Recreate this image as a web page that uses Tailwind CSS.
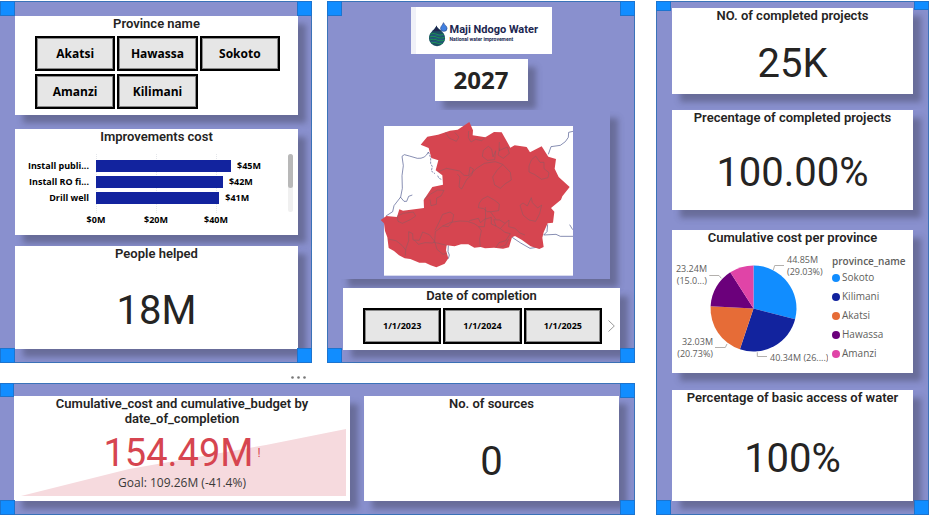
<!DOCTYPE html>
<html lang="en">
<head>
<meta charset="utf-8">
<meta name="viewport" content="width=device-width, initial-scale=1">
<title>Maji Ndogo Water dashboard</title>
<script src="https://cdn.jsdelivr.net/npm/@tailwindcss/browser@4"></script>
</head>
<body class="bg-white font-['Roboto',sans-serif] text-[#252423]">
<main class="grid grid-cols-[635fr_273fr] gap-[21px] pt-px pr-[3px]">
  <div class="flex flex-col">
    <div class="grid grid-cols-[312fr_308fr] gap-[15px]">

      <!-- Provinces, improvements, people -->
      <section class="relative flex flex-col border border-l-0 border-[#3b73b9] bg-[#8990ce] pt-[14px] pr-[13px] pb-[13px] pl-[15px]">
        <article class="min-h-[99px] bg-white shadow-[8px_8px_6px_0_rgba(60,60,80,0.42)]">
          <h2 class="text-center text-[13px] leading-4 font-semibold">Province name</h2>
          <div class="mt-1 grid grid-cols-3 gap-x-[2px] gap-y-[3px] pr-[18px] pl-5 pb-[6px] font-['Open_Sans',sans-serif] text-[12px] font-bold text-black">
            <button class="h-[35px] border-2 border-black bg-[#e6e6e6] shadow-[inset_0_0_0_1px_#8a8a8a]">Akatsi</button>
            <button class="h-[35px] border-2 border-black bg-[#e6e6e6] shadow-[inset_0_0_0_1px_#8a8a8a]">Hawassa</button>
            <button class="h-[35px] border-2 border-black bg-[#e6e6e6] shadow-[inset_0_0_0_1px_#8a8a8a]">Sokoto</button>
            <button class="h-[35px] border-2 border-black bg-[#e6e6e6] shadow-[inset_0_0_0_1px_#8a8a8a]">Amanzi</button>
            <button class="h-[35px] border-2 border-black bg-[#e6e6e6] shadow-[inset_0_0_0_1px_#8a8a8a]">Kilimani</button>
          </div>
        </article>

        <article class="mt-[14px] min-h-[106px] bg-white shadow-[8px_8px_6px_0_rgba(60,60,80,0.42)]">
          <h2 class="text-center text-[13px] leading-4 font-semibold">Improvements cost</h2>
          <div class="mt-[9px] flex pr-[5px] font-['Open_Sans',sans-serif] text-[9px] leading-3 font-bold text-black">
            <div class="flex w-[81px] flex-col gap-1 pt-[6px] pr-[7px] text-right whitespace-nowrap">
              <span>Install publi...</span>
              <span>Install RO fi...</span>
              <span>Drill well</span>
            </div>
            <div class="mr-3 flex-1">
              <div class="relative flex flex-col gap-1 pt-[6px] pb-[9px]">
                <div class="absolute inset-0 grid grid-cols-3">
                  <i class="border-l border-dotted border-gray-200"></i>
                  <i class="border-l border-dotted border-gray-200"></i>
                  <i class="border-l border-dotted border-gray-200"></i>
                </div>
                <div class="relative flex gap-[6px]"><b class="h-3 shrink-0 bg-[#12239e]" style="width:75%"></b>$45M</div>
                <div class="relative flex gap-[6px]"><b class="h-3 shrink-0 bg-[#12239e]" style="width:70.5%"></b>$42M</div>
                <div class="relative flex gap-[6px]"><b class="h-3 shrink-0 bg-[#12239e]" style="width:68.5%"></b>$41M</div>
              </div>
              <div class="grid grid-cols-3 pt-px">
                <span class="w-fit -translate-x-1/2">$0M</span>
                <span class="w-fit -translate-x-1/2">$20M</span>
                <span class="w-fit -translate-x-1/2">$40M</span>
              </div>
            </div>
            <div class="mb-[14px] w-[5px] rounded-full bg-[#f0f0f0]"><div class="h-[34px] rounded-full bg-[#b8b8b8]"></div></div>
          </div>
        </article>

        <article class="mt-[11px] flex min-h-[103px] flex-1 flex-col bg-white shadow-[8px_8px_6px_0_rgba(60,60,80,0.42)]">
          <h2 class="text-center text-[13px] leading-4 font-semibold">People helped</h2>
          <p class="flex flex-1 items-center justify-center pt-[10px] text-[40px] leading-10">18M</p>
        </article>
        <span class="absolute -top-px left-0 size-[15px] border border-[#1c74cf] bg-[#118dff]"></span>
        <span class="absolute -top-px -right-px size-[15px] border border-[#1c74cf] bg-[#118dff]"></span>
        <span class="absolute -bottom-px left-0 size-[15px] border border-[#1c74cf] bg-[#118dff]"></span>
        <span class="absolute -right-px -bottom-px size-[15px] border border-[#1c74cf] bg-[#118dff]"></span>
      </section>

      <!-- Logo, year, map, dates -->
      <section class="relative flex flex-col border border-[#3b73b9] bg-[#8990ce] px-3 pt-[5px] pb-3">
        <div class="flex h-[47px] w-[141px] items-center gap-[2px] self-center border-l-[5px] border-[#f0f1f8] bg-white pt-2 pl-3 text-[#20264f]">
          <svg class="w-5 shrink-0" viewBox="322 64 62 76" aria-hidden="true">
            <path d="M348 75 C352 88 375 93 375 114 A25 25 0 0 1 325 114 C325 95 345 88 348 75Z" fill="#1c4d62"/>
            <path d="M348 75 C350 84 358 88 364 93 H334 C341 88 346 84 348 75Z" fill="#20264f"/>
            <path d="M329 102 q10 -5 20 0 t21 0 M326 111 q12 -5 24 0 t24 0 M327 120 q12 -5 23 0 t23 0 M332 129 q9 -4 18 0 t17 0" fill="none" stroke="#1d8b5b" stroke-width="3.5"/>
            <path d="M330 106 q10 -4 20 0 t21 0 M327 116 q12 -5 24 0 t22 0 M330 125 q9 -4 20 0 t19 0" fill="none" stroke="#2a5b99" stroke-width="2"/>
            <path d="M370 66 C373 74 381 76 381 84 A10 9 0 0 1 361 84 C361 77 368 73 370 66Z" fill="#3f7fe0" stroke="#254282" stroke-width="2"/>
          </svg>
          <div class="pb-1 whitespace-nowrap">
            <p class="text-[11px] leading-3 font-bold">Maji Ndogo Water</p>
            <p class="text-[5px] leading-[6px] font-bold">National water improvement</p>
          </div>
        </div>
        <p class="mt-[5px] w-[93px] self-center bg-white text-center font-['Open_Sans',sans-serif] text-[24px] leading-[42px] font-bold shadow-[8px_8px_6px_0_rgba(60,60,80,0.42)]">2027</p>

        <div class="mt-[9px] mr-3 bg-[#8990ce] shadow-[8px_8px_6px_0_rgba(60,60,80,0.42)]">
          <svg class="block w-full" viewBox="30 15 810 507" role="img" aria-label="Map of provinces">
            <rect x="162" y="63" width="567" height="449" fill="#fff"/>
            <g fill="none" stroke="#4c568c" stroke-width="2">
              <path d="M295 141 Q286 162 262 160 L238 153 L223 149 L216 154 L220 182 L216 212 L217 250 L212 276 L192 302 L188 320 L168 333"/>
              <path d="M211 276 L222 289 L230 289 L236 274 L247 270"/>
              <path d="M295 141 L302 158 L302 176 L307 185 L304 198 L315 206 M323 212 l4 8 l7 3" stroke-dasharray="7 3"/>
              <path d="M655 148 L663 125 L691 121 L706 110 L715 97 L716 82 L729 79"/>
              <path d="M653 358 L651 380 L641 390 L678 388 L691 394 L729 394 M719 359 L728 374"/>
              <path d="M545 396 L572 414 L600 430 L620 427"/>
              <path d="M355 421 L354 440 L358 450 L355 461"/>
            </g>
            <path fill="#d64550" d="M152 345 L169 333 L201 336 L208 313 L219 317 L282 309 L281 285 L307 246 L339 239 L337 211 L317 196 L325 166 L304 159 L296 129 L272 119 L292 95 L324 89 L360 77 L383 74 L418 51 L429 76 L428 91 L466 97 L492 81 L515 82 L541 128 L554 121 L590 126 L600 142 L635 124 L655 155 L678 162 L674 191 L686 216 L719 246 L697 274 L693 284 L663 309 L673 320 L669 353 L653 355 L641 382 L637 398 L641 426 L628 432 L602 424 L576 405 L555 393 L546 397 L537 427 L519 431 L492 428 L465 430 L452 426 L433 428 L415 418 L393 418 L374 424 L350 421 L348 436 L355 460 L344 476 L319 487 L302 481 L286 473 L268 473 L241 462 L224 460 L207 451 L192 438 L176 429 L172 397 L165 378 L162 355Z"/>
            <g fill="none" stroke="#8c5a62" stroke-width="1.6" stroke-linejoin="round">
              <path d="M346 82 L357 99 L379 109 L387 96 L374 82 M416 78 L415 98 L423 111 L437 103 L455 107 L466 97"/>
              <path d="M457 154 L460 136 L475 124 L485 132 L489 156 L497 137 L494 164 L472 166Z M508 111 L507 137 L532 126 L538 145 L520 160 L504 150 L510 128"/>
              <path d="M325 200 L350 190 L389 198 L402 211 L416 212 L420 186 L430 192 L426 209 L411 222 L395 252 L387 246 L390 216 L382 207 M416 212 L440 190 L463 175 L496 170 L518 178 L541 202 L544 225 L526 236 L511 250 L494 240 L488 216 L501 196 L518 179"/>
              <path d="M597 183 L604 165 L617 153 L630 172 L642 172 L642 191 L657 203 L654 218 L635 223 L613 208 L597 201Z"/>
              <path d="M283 282 L302 267 L323 255 L342 256 L333 273 L320 279 L319 298 L303 302 L300 283 M448 294 L457 282 L473 274 L494 286 L508 297 L506 317 L484 320 L472 320 L461 311 L445 308Z"/>
              <path d="M570 301 L579 294 L592 303 L604 278 L607 293 L623 309 L635 300 L629 326 L617 349 L597 345 L579 330Z"/>
              <path d="M202 333 L220 325 L250 321 L257 333 L241 344 L217 355 L204 349Z M315 376 L329 348 L338 328 L360 321 L371 329 L367 350 L355 365 L338 363"/>
              <path d="M314 409 L316 380 L338 363 L362 352 L390 348 L412 349 L433 356 L446 365 L454 377 L449 402 L451 426 M418 347 L445 340 L451 353 L466 341 L463 365 L446 365 M466 306 L467 342 L484 337 L484 357 L498 363 L491 344 L509 345 L525 355 L511 371 L496 362 M482 321 L497 342 M525 355 L537 345 L536 365 L555 370 L570 384 L585 390 M511 371 L525 382 L541 386 L527 407 L507 413 L498 427"/>
              <path d="M236 380 L248 386 L249 405 L268 406 L278 381 L298 389 L314 409 L307 414 L285 413 L265 418 L253 405 M236 380 L236 407 L227 433 L226 452 M174 402 L198 407 L216 421 L227 435 M314 409 L321 433 L339 448 L350 445 M310 412 L326 415 L350 421 M536 402 L526 421 L509 427"/>
            </g>
          </svg>
        </div>

        <article class="mt-[9px] mr-[2px] ml-[3px] min-h-[62px] bg-white shadow-[8px_8px_6px_0_rgba(60,60,80,0.42)]">
          <h2 class="text-center text-[13px] leading-4 font-semibold">Date of completion</h2>
          <div class="mt-1 flex items-center pl-5 font-['Open_Sans',sans-serif] text-[9px] font-bold text-black">
            <div class="grid flex-1 grid-cols-3 gap-[2px]">
              <button class="h-9 border-2 border-black bg-[#e6e6e6] shadow-[inset_0_0_0_1px_#8a8a8a]">1/1/2023</button>
              <button class="h-9 border-2 border-black bg-[#e6e6e6] shadow-[inset_0_0_0_1px_#8a8a8a]">1/1/2024</button>
              <button class="h-9 border-2 border-black bg-[#e6e6e6] shadow-[inset_0_0_0_1px_#8a8a8a]">1/1/2025</button>
            </div>
            <button class="flex w-[18px] justify-center" aria-label="Next dates">
              <svg class="h-3 w-[7px]" viewBox="0 0 7 12" fill="none" stroke="#999" stroke-width="1"><path d="M.5 .5 6.3 6 .5 11.5"/></svg>
            </button>
          </div>
        </article>
        <span class="absolute -top-px -left-px size-[15px] border border-[#1c74cf] bg-[#118dff]"></span>
        <span class="absolute -top-px -right-px size-[15px] border border-[#1c74cf] bg-[#118dff]"></span>
        <span class="absolute -bottom-px -left-px size-[15px] border border-[#1c74cf] bg-[#118dff]"></span>
        <span class="absolute -right-px -bottom-px size-[15px] border border-[#1c74cf] bg-[#118dff]"></span>
      </section>
    </div>

    <div class="flex h-5 w-[312px] items-center justify-end pt-2 pr-[6px]">
      <button aria-label="More options"><svg class="block h-[3px] w-[15px]" viewBox="0 0 15 3" fill="#777"><circle cx="1.5" cy="1.5" r="1.3"/><circle cx="7.5" cy="1.5" r="1.3"/><circle cx="13.5" cy="1.5" r="1.3"/></svg></button>
    </div>

    <!-- Budget and sources -->
    <section class="relative grid grid-cols-[336fr_255fr] gap-[14px] border border-l-0 border-[#3b73b9] bg-[#8990ce] pt-3 pr-[15px] pb-[13px] pl-[14px]">
      <article class="relative min-h-[105px] bg-white text-center shadow-[8px_8px_6px_0_rgba(60,60,80,0.42)]">
        <div class="absolute inset-x-0 bottom-[5px] pr-1 pl-[7px]">
          <svg class="block h-[67px] w-full" viewBox="0 0 325 67" preserveAspectRatio="none" aria-hidden="true"><path d="M0 67 L108 40 L245 16 L325 0 V67Z" fill="#f6dade"/></svg>
        </div>
        <div class="relative">
          <h2 class="px-8 text-[13px] leading-[15px] font-semibold">Cumulative_cost and cumulative_budget by date_of_completion</h2>
          <p class="mt-[7px] flex items-center justify-center gap-1 text-[38px] leading-10 text-[#d64550]">154.49M<span class="text-[12px]">!</span></p>
          <p class="mt-[2px] font-['Open_Sans',sans-serif] text-[12px] leading-4 text-[#3a3938]">Goal: 109.26M (-41.4%)</p>
        </div>
      </article>
      <article class="flex min-h-[105px] flex-col bg-white shadow-[8px_8px_6px_0_rgba(60,60,80,0.42)]">
        <h2 class="text-center text-[13px] leading-4 font-semibold">No. of sources</h2>
        <p class="flex flex-1 items-center justify-center pt-[10px] text-[40px] leading-10">0</p>
      </article>
      <span class="absolute -top-px left-0 size-[14px] border border-[#1c74cf] bg-[#118dff]"></span>
      <span class="absolute -top-px -right-px size-[15px] border border-[#1c74cf] bg-[#118dff]"></span>
      <span class="absolute -bottom-px left-0 size-[15px] border border-[#1c74cf] bg-[#118dff]"></span>
      <span class="absolute -right-px -bottom-px size-[15px] border border-[#1c74cf] bg-[#118dff]"></span>
    </section>
  </div>

  <!-- Projects, cost per province, access -->
  <section class="relative flex flex-col border border-[#3b73b9] bg-[#8990ce] px-[15px] pt-[6px] pb-[13px]">
    <span class="absolute -top-px -left-px h-[10px] w-[15px] border border-[#1c74cf] bg-[#118dff]"></span>
    <span class="absolute -top-px -right-px h-[9px] w-[15px] border border-[#1c74cf] bg-[#118dff]"></span>
    <span class="absolute -bottom-px -left-px size-[15px] border border-[#1c74cf] bg-[#118dff]"></span>
    <span class="absolute -right-px -bottom-px size-[15px] border border-[#1c74cf] bg-[#118dff]"></span>
    <article class="flex min-h-[86px] flex-col bg-white shadow-[8px_8px_6px_0_rgba(60,60,80,0.42)]">
      <h2 class="text-center text-[13px] leading-4 font-semibold">NO. of completed projects</h2>
      <p class="flex flex-1 items-center justify-center pt-[10px] text-[40px] leading-10">25K</p>
    </article>
    <article class="mt-4 flex min-h-[100px] flex-col bg-white shadow-[8px_8px_6px_0_rgba(60,60,80,0.42)]">
      <h2 class="text-center text-[13px] leading-4 font-semibold">Precentage of completed projects</h2>
      <p class="flex flex-1 items-center justify-center pt-[10px] text-[40px] leading-10">100.00%</p>
    </article>
    <article class="mt-5 min-h-[143px] bg-white shadow-[8px_8px_6px_0_rgba(60,60,80,0.42)]">
      <h2 class="text-center text-[13px] leading-4 font-semibold">Cumulative cost per province</h2>
      <div class="flex font-['Open_Sans',sans-serif] text-[10px] text-[#605e5c]">
        <svg class="h-[127px] w-[156px] shrink-0" viewBox="0 0 156 127" role="img" aria-label="Pie chart of cumulative cost per province">
          <path fill="#118dff" d="M81.5 62.5 V19.5 A43 43 0 0 1 123.1 73.3Z"/>
          <path fill="#12239e" d="M81.5 62.5 L123.1 73.3 A43 43 0 0 1 67.9 103.3Z"/>
          <path fill="#e66c37" d="M81.5 62.5 L67.9 103.3 A43 43 0 0 1 38.6 60.2Z"/>
          <path fill="#6b007b" d="M81.5 62.5 L38.6 60.2 A43 43 0 0 1 58.3 26.3Z"/>
          <path fill="#e044a7" d="M81.5 62.5 L58.3 26.3 A43 43 0 0 1 81.5 19.5Z"/>
          <path fill="none" stroke="#b3b0ad" d="M101.3 24 L102.7 19.5 H112 M85.3 106.3 V110.5 H95 M55 98 L53.3 101.5 H43 M49.3 32.3 L47 29.5 H37.3"/>
          <g fill="#605e5c" font-size="9">
            <text x="115" y="17">44.85M</text>
            <text x="115" y="29">(29.03%)</text>
            <text x="98" y="115">40.34M (26....)</text>
            <g text-anchor="end">
              <text x="35" y="26">23.24M</text>
              <text x="35" y="38">(15.0...)</text>
              <text x="41" y="99">32.03M</text>
              <text x="41" y="111">(20.73%)</text>
            </g>
          </g>
        </svg>
        <div class="pt-[8px] pl-1">
          <h3 class="leading-[14px] font-semibold">province_name</h3>
          <ul class="leading-[19px]">
            <li class="flex items-center gap-[2px]"><i class="size-2 rounded-full bg-[#118dff]"></i>Sokoto</li>
            <li class="flex items-center gap-[2px]"><i class="size-2 rounded-full bg-[#12239e]"></i>Kilimani</li>
            <li class="flex items-center gap-[2px]"><i class="size-2 rounded-full bg-[#e66c37]"></i>Akatsi</li>
            <li class="flex items-center gap-[2px]"><i class="size-2 rounded-full bg-[#6b007b]"></i>Hawassa</li>
            <li class="flex items-center gap-[2px]"><i class="size-2 rounded-full bg-[#e044a7]"></i>Amanzi</li>
          </ul>
        </div>
      </div>
    </article>
    <article class="mt-[17px] flex min-h-[111px] flex-1 flex-col bg-white shadow-[8px_8px_6px_0_rgba(60,60,80,0.42)]">
      <h2 class="text-center text-[13px] leading-4 font-semibold">Percentage of basic access of water</h2>
      <p class="flex flex-1 items-center justify-center pt-[10px] text-[40px] leading-10">100%</p>
    </article>
  </section>
</main>
</body>
</html>
